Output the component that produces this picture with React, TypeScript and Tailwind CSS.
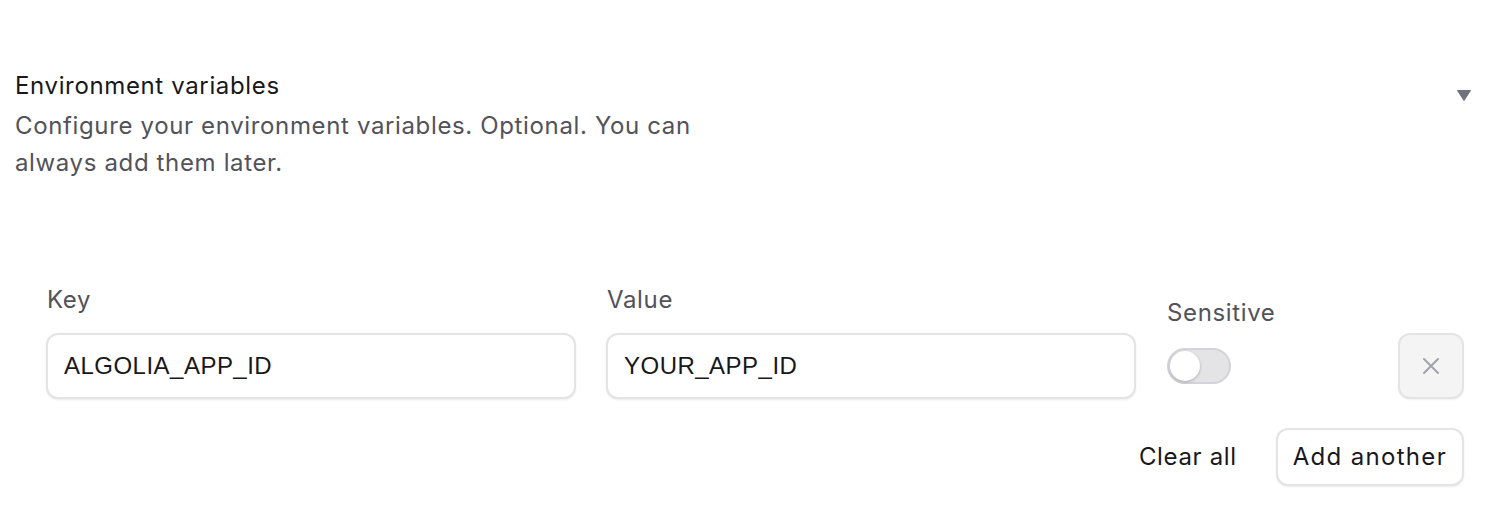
import React, { useState } from "react";

export default function App() {
  const [sensitive, setSensitive] = useState(false);
  return (
    <div className="w-[1500px] h-[514px] bg-white font-['Inter','Noto_Sans',sans-serif] tracking-[0.04em] overflow-hidden">
      <div className="pt-[67px] pl-[15px] pr-[29px] flex justify-between items-start">
        <div>
          <h2 className="text-[24px] leading-[37px] text-[#18181b] font-normal">Environment variables</h2>
          <p className="mt-[3px] text-[24px] leading-[37px] text-[#52525b] max-w-[730px]">
            Configure your environment variables. Optional. You can always add them later.
          </p>
        </div>
        <svg width="14" height="11" viewBox="0 0 14 11" className="mt-[23px]">
          <path d="M0.5 0.5 H13.5 L7 10.5 Z" fill="#71717a" strokeLinejoin="round" stroke="#71717a" />
        </svg>
      </div>

      <div className="mt-[100px] pl-[46px] pr-[36px]">
        <div className="flex items-end gap-[30px]">
          <div className="w-[530px] flex flex-col">
            <label className="text-[24px] leading-[38px] text-[#52525b] pl-px">Key</label>
            <input
              defaultValue="ALGOLIA_APP_ID"
              className="mt-[14px] h-[66px] w-full rounded-[12px] border-2 border-[#e4e4e7] bg-white px-[16px] text-[24px] tracking-[0.02em] text-[#18181b] font-['Liberation_Sans',Arial,sans-serif] shadow-[0_1px_2px_rgba(0,0,0,0.08)] outline-none"
            />
          </div>
          <div className="w-[530px] flex flex-col">
            <label className="text-[24px] leading-[38px] text-[#52525b] pl-px">Value</label>
            <input
              defaultValue="YOUR_APP_ID"
              className="mt-[14px] h-[66px] w-full rounded-[12px] border-2 border-[#e4e4e7] bg-white px-[16px] text-[24px] tracking-[0.02em] text-[#18181b] font-['Liberation_Sans',Arial,sans-serif] shadow-[0_1px_2px_rgba(0,0,0,0.08)] outline-none"
            />
          </div>
          <div className="flex-1 flex items-end justify-between pl-px">
            <div className="flex flex-col mb-[15px]">
              <span className="text-[24px] leading-[38px] text-[#52525b]">Sensitive</span>
              <button
                onClick={() => setSensitive(!sensitive)}
                className="mt-[16px] w-[64px] h-[36px] rounded-full bg-[#e4e4e7] border-2 border-[#d4d4d8] relative"
              >
                <span className="absolute left-[1px] top-[1px] w-[30px] h-[30px] rounded-full bg-white shadow-[0_1px_3px_rgba(0,0,0,0.25)]" />
              </button>
            </div>
            <button className="w-[66px] h-[66px] rounded-[12px] bg-[#f4f4f5] border-2 border-[#e4e4e7] flex items-center justify-center shadow-[0_1px_2px_rgba(0,0,0,0.06)]">
              <svg width="20" height="20" viewBox="0 0 20 20" fill="none" stroke="#a1a1aa" strokeWidth="2" strokeLinecap="round">
                <path d="M3 3 L17 17 M17 3 L3 17" />
              </svg>
            </button>
          </div>
        </div>

        <div className="mt-[29px] flex justify-end items-center gap-[39px]">
          <button className="text-[24px] leading-[36px] text-[#18181b]">Clear all</button>
          <button className="h-[58px] px-[15px] rounded-[12px] border-2 border-[#e4e4e7] bg-white text-[24px] tracking-[0.055em] text-[#18181b] shadow-[0_1px_2px_rgba(0,0,0,0.08)]">
            Add another
          </button>
        </div>
      </div>
    </div>
  );
}
